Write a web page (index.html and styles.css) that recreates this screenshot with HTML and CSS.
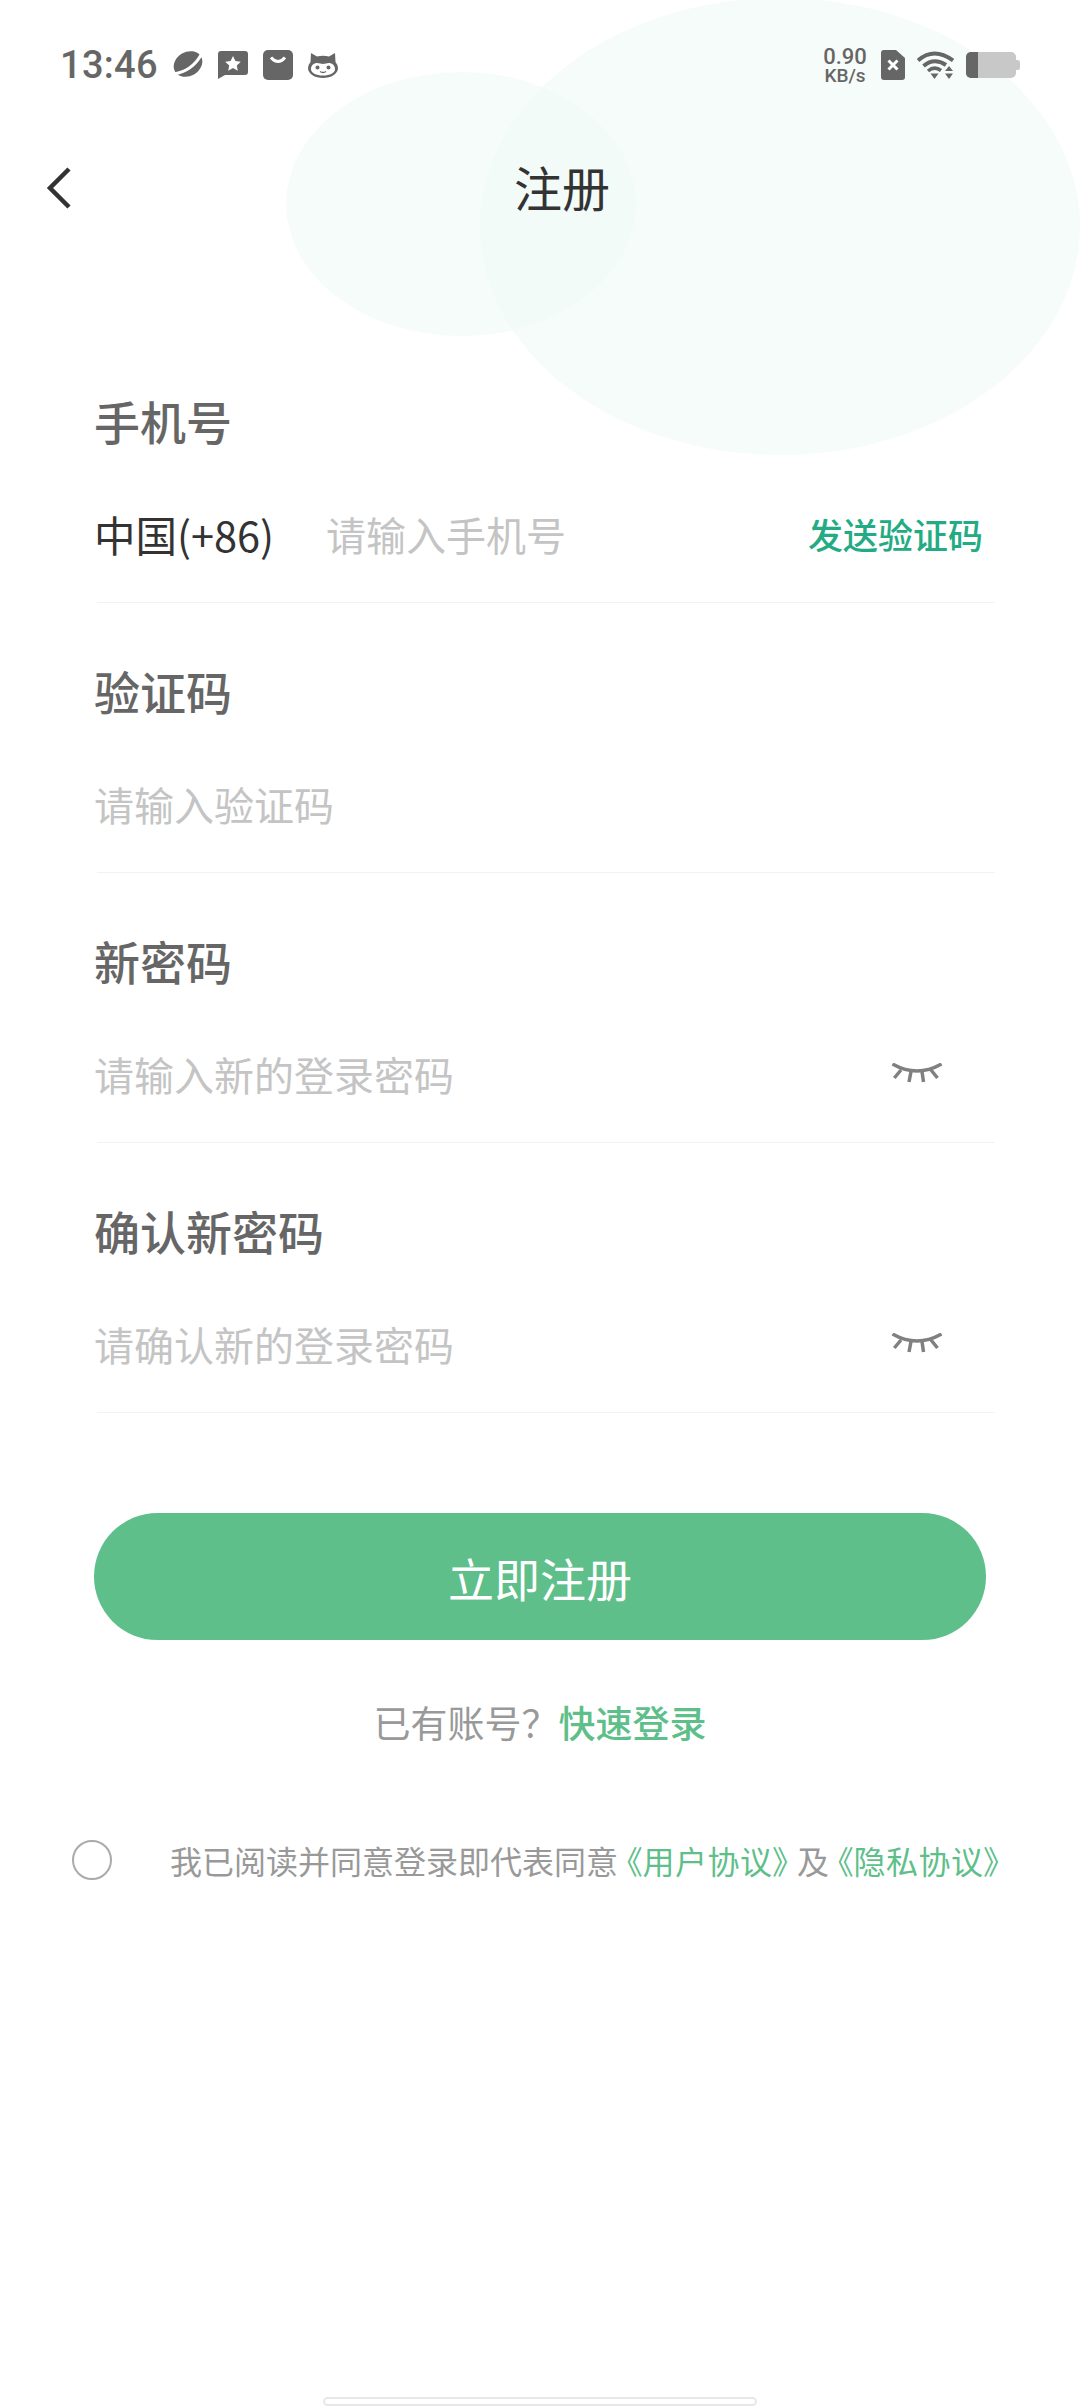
FILE: index.html
```html
<!DOCTYPE html>
<html lang="zh-CN">
<head>
    <meta charset="UTF-8">
    <meta name="viewport" content="width=device-width, initial-scale=1.0">
    <title>注册</title>
    <link rel="stylesheet" href="styles.css">
</head>
<body>
    <div class="page">
        <div class="blob blob-small"></div>
        <div class="blob blob-large"></div>

        <div class="status-bar">
            <div class="status-left">
                <span class="time">13:46</span>
                <svg class="note-icon" width="30" height="30" viewBox="0 0 30 30">
                    <ellipse cx="15" cy="14" rx="15" ry="12" fill="#666" transform="rotate(-30 15 14)"/>
                    <path d="M1 24Q19 21 28 5" fill="none" stroke="#fff" stroke-width="3"/>
                </svg>
                <svg class="note-icon" width="30" height="30" viewBox="0 0 30 30">
                    <path d="M3 1h24a3 3 0 0 1 3 3v18a3 3 0 0 1-3 3H7l-7 4V4a3 3 0 0 1 3-3z" fill="#666"/>
                    <path d="M15 6l2.400 5 5.400.7-4 3.700 1 5.400-4.800-2.700-4.800 2.700 1-5.400-4-3.700 5.400-.7z" fill="#fff"/>
                </svg>
                <svg class="note-icon" width="30" height="30" viewBox="0 0 30 30">
                    <rect width="30" height="30" rx="5" fill="#666"/>
                    <path d="M8 7.500Q15 15.500 22 7.500" fill="none" stroke="#fff" stroke-width="3"/>
                </svg>
                <svg class="note-icon" width="30" height="30" viewBox="0 0 30 30">
                    <path d="M3 3l6 3.500Q15 5 21 6.500L27 3l.5 9Q30 15 30 18c0 6-7 10-15 10S0 24 0 18q0-3 2.500-6z" fill="#666"/>
                    <path d="M3 19c0-4 3.500-6 6-6 2.500 0 4 1 6 1s3.500-1 6-1c2.500 0 6 2 6 6 0 4-5 6.500-12 6.500S3 23 3 19z" fill="#fff"/>
                    <circle cx="9.500" cy="17.500" r="2" fill="#666"/>
                    <circle cx="20.500" cy="17.500" r="2" fill="#666"/>
                    <path d="M12 21.500q3 2 6 0" fill="none" stroke="#666" stroke-width="1.300"/>
                </svg>
            </div>
            <div class="status-right">
                <div class="speed">
                    <span class="speed-num">0.90</span>
                    <span class="speed-unit">KB/s</span>
                </div>
                <svg width="24" height="30" viewBox="0 0 24 30">
                    <path d="M3 0h12l9 8v19a3 3 0 0 1-3 3H3a3 3 0 0 1-3-3V3a3 3 0 0 1 3-3z" fill="#666"/>
                    <path d="M7.500 10.500l9 9M16.500 10.500l-9 9" stroke="#fff" stroke-width="3"/>
                </svg>
                <svg width="37" height="30" viewBox="0 0 37 30">
                    <path d="M1 10.500Q17 -3.500 36 10.500" fill="none" stroke="#666" stroke-width="4"/>
                    <path d="M6.500 16Q17 7 29 15" fill="none" stroke="#666" stroke-width="4"/>
                    <path d="M11 21Q17.500 15.500 24 20.500" fill="none" stroke="#666" stroke-width="3.600"/>
                    <path d="M13.500 23.500h8L17.500 29z" fill="#666"/>
                    <path d="M32 16l4 5h-8zM28 23.500h8l-4 5.500z" fill="#666"/>
                </svg>
                <svg width="54" height="28" viewBox="0 0 54 28">
                    <rect x="0" y="1" width="50" height="26" rx="5" fill="#c8c8c8"/>
                    <path d="M5 1h7v26H5a5 5 0 0 1-5-5V6a5 5 0 0 1 5-5z" fill="#666"/>
                    <path d="M50 9h1.500a2.500 2.500 0 0 1 2.500 2.500v5a2.500 2.500 0 0 1-2.500 2.500H50z" fill="#c8c8c8"/>
                </svg>
            </div>
        </div>

        <div class="header">
            <svg class="back" width="26" height="42" viewBox="0 0 26 42">
                <path d="M23 2L4 21l19 19" fill="none" stroke="#333" stroke-width="4.500"/>
            </svg>
            <h1>注册</h1>
        </div>

        <div class="form">
            <div class="field">
                <div class="label">手机号</div>
                <div class="row">
                    <span class="country">中国(+86)</span>
                    <span class="placeholder">请输入手机号</span>
                    <a class="send-code">发送验证码</a>
                </div>
            </div>
            <div class="field">
                <div class="label">验证码</div>
                <div class="row">
                    <span class="placeholder">请输入验证码</span>
                </div>
            </div>
            <div class="field">
                <div class="label">新密码</div>
                <div class="row">
                    <span class="placeholder">请输入新的登录密码</span>
                    <svg class="eye" width="54" height="22" viewBox="0 0 54 22">
                        <path d="M1.500 1Q26 15 50.500 1M3.300 15L10 7M18 19l2-10.500M32.500 19L31 8.500M46.500 15L40 7" fill="none" stroke="#808080" stroke-width="3.500"/>
                    </svg>
                </div>
            </div>
            <div class="field">
                <div class="label">确认新密码</div>
                <div class="row">
                    <span class="placeholder">请确认新的登录密码</span>
                    <svg class="eye" width="54" height="22" viewBox="0 0 54 22">
                        <path d="M1.500 1Q26 15 50.500 1M3.300 15L10 7M18 19l2-10.500M32.500 19L31 8.500M46.500 15L40 7" fill="none" stroke="#808080" stroke-width="3.500"/>
                    </svg>
                </div>
            </div>
        </div>

        <button class="submit">立即注册</button>

        <div class="login-line">已有账号？<a>快速登录</a></div>

        <div class="agree">
            <span class="radio"></span>
            <span class="agree-text">我已阅读并同意登录即代表同意<a>《用户协议》</a>及<a>《隐私协议》</a></span>
        </div>

        <div class="home-bar"></div>
    </div>
</body>
</html>
```

FILE: styles.css
```css
* {
    box-sizing: border-box;
}

body {
    margin: 0;
    background: #fff;
    font-family: "Noto Sans CJK SC", "Noto Sans", sans-serif;
}

.page {
    position: relative;
    width: 1080px;
    height: 2408px;
    overflow: hidden;
    display: flex;
    flex-direction: column;
}

/* background shapes behind the header */
.blob {
    position: absolute;
    border-radius: 50%;
    background: rgba(240, 250, 247, 0.6);
}

.blob-small {
    left: 286px;
    top: 72px;
    width: 350px;
    height: 264px;
}

.blob-large {
    left: 480px;
    top: -2px;
    width: 600px;
    height: 457px;
}

.status-bar {
    position: relative;
    height: 126px;
    padding: 46px 60px 0 60px;
    display: flex;
    justify-content: space-between;
    align-items: flex-start;
}

.status-left {
    display: flex;
    align-items: center;
    gap: 15px;
    height: 38px;
}

.time {
    font-family: Roboto, sans-serif;
    font-size: 38px;
    font-weight: 500;
    line-height: 38px;
    color: #666;
    letter-spacing: 0.3px;
}

.status-right {
    display: flex;
    align-items: center;
    gap: 12px;
    height: 38px;
}

.speed {
    display: flex;
    flex-direction: column;
    align-items: center;
    font-family: Roboto, sans-serif;
    font-weight: 500;
    color: #666;
    width: 48px;
}

.speed-num {
    font-size: 22px;
    line-height: 21px;
}

.speed-unit {
    font-size: 19px;
    line-height: 18px;
}

.header {
    position: relative;
    height: 124px;
    display: flex;
    align-items: center;
    padding-left: 46px;
}

.header h1 {
    margin: 0 0 4px 442px;
    font-size: 48px;
    font-weight: 400;
    color: #333;
}

.form {
    position: relative;
    margin: 83px 85px 0 97px;
}

.field {
    height: 270px;
    padding-top: 57px;
    border-bottom: 1px solid #f2f2f2;
}

.label {
    margin-left: -3px;
    font-size: 46px;
    font-weight: 500;
    line-height: 60px;
    color: #666;
}

.row {
    height: 152px;
    margin-left: -3px;
    padding-top: 15px;
    display: flex;
    align-items: center;
    font-size: 40px;
}

.country {
    color: #333;
    width: 232px;
    font-size: 41.5px;
}

.placeholder {
    color: #c4c4c4;
    flex: 1;
}

.send-code {
    color: #23ab84;
    font-size: 35px;
    font-weight: 500;
    margin-right: 12px;
}

.eye {
    margin-right: 50px;
}

.submit {
    display: block;
    margin: 100px 0 0 94px;
    width: 892px;
    height: 127px;
    border: none;
    border-radius: 64px;
    background: #5fbf8a;
    color: #fff;
    font-family: inherit;
    font-size: 46px;
}

.login-line {
    margin-top: 55px;
    text-align: center;
    font-size: 37px;
    line-height: 54px;
    color: #999;
}

.login-line a {
    color: #5fbf8a;
    font-weight: 500;
}

.agree {
    margin: 89px 0 0 72px;
    display: flex;
    align-items: center;
}

.radio {
    width: 40px;
    height: 40px;
    border: 2px solid #aaa;
    border-radius: 50%;
}

.agree-text {
    margin-left: 58px;
    font-size: 32px;
    line-height: 44px;
    color: #999;
    white-space: nowrap;
    font-feature-settings: "palt";
}

.agree-text a {
    color: #5fbf8a;
    padding: 0 8px;
    letter-spacing: 0.5px;
}

.home-bar {
    margin: auto 0 2px 323px;
    width: 434px;
    height: 9px;
    border: 2px solid #e8e8e8;
    border-radius: 5px;
    background: #fff;
}
```
